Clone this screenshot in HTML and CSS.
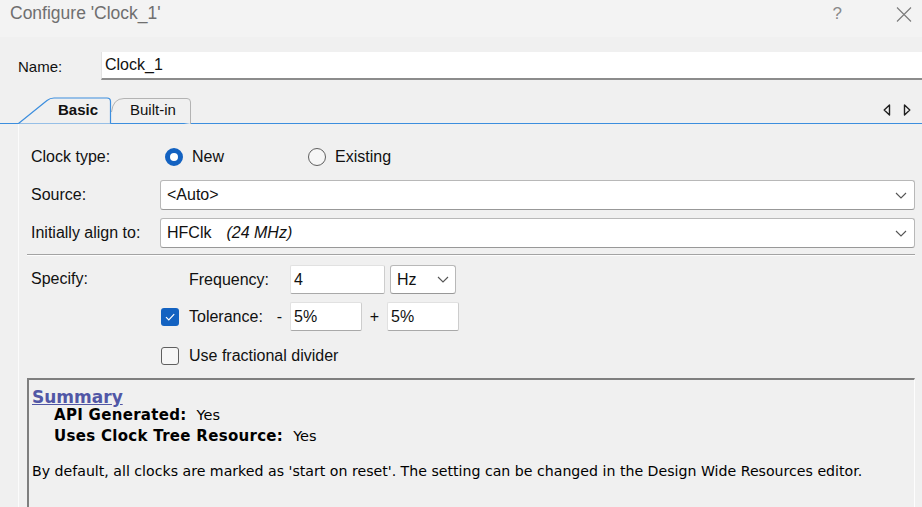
FILE: index.html
```html
<!DOCTYPE html>
<html>
<head>
<meta charset="utf-8">
<link rel="stylesheet" href="styles.css">
</head>
<body>
<div class="window">
  <header class="titlebar">
    <span class="title">Configure 'Clock_1'</span>
    <span class="help">?</span>
    <span class="close"><svg width="16" height="15" viewBox="0 0 16 15"><path d="M1 0.5 L15 14.5 M15 0.5 L1 14.5" stroke="#7a7a7a" stroke-width="1.1" fill="none"/></svg></span>
  </header>

  <div class="name-row">
    <span class="name-label">Name:</span>
    <div class="name-input">Clock_1</div>
  </div>

  <div class="tabstrip">
    <div class="tab tab-basic">
      <svg class="tab-shape" width="94" height="27" viewBox="0 0 94 27"><path d="M0.5 26.5 L29 3.5 Q32 1 36 1 L89 1 Q92.5 1 92.5 4.5 L92.5 26.5" fill="#f0f0f0" stroke="#3c8ede" stroke-width="1.2"/></svg>
      <span class="tab-text bold">Basic</span>
    </div>
    <div class="tab tab-builtin">
      <svg class="tab-shape" width="80" height="26" viewBox="0 0 80 26"><path d="M0.5 14 Q2 0.5 13 0.5 L76 0.5 Q79.5 0.5 79.5 4 L79.5 26" fill="#f0f0f0" stroke="#b3b3b3" stroke-width="1"/></svg>
      <span class="tab-text">Built-in</span>
    </div>
    <div class="tab-arrows">
      <svg width="8" height="12" viewBox="0 0 8 12"><path d="M6.5 1 L1.2 6 L6.5 11 Z" fill="none" stroke="#202020" stroke-width="1.4" stroke-linejoin="round"/></svg>
      <svg width="8" height="12" viewBox="0 0 8 12"><path d="M1.5 1 L6.8 6 L1.5 11 Z" fill="none" stroke="#202020" stroke-width="1.4" stroke-linejoin="round"/></svg>
    </div>
  </div>

  <section class="panel">
    <div class="row">
      <span class="label">Clock type:</span>
      <div class="radio-group">
        <span class="radio-item"><span class="radio checked"></span>New</span>
        <span class="radio-item"><span class="radio"></span>Existing</span>
      </div>
    </div>
    <div class="row">
      <span class="label">Source:</span>
      <div class="combo"><span class="combo-text">&lt;Auto&gt;</span><svg class="chev" width="12" height="7" viewBox="0 0 12 7"><path d="M1 1 L6 6 L11 1" fill="none" stroke="#555" stroke-width="1.1"/></svg></div>
    </div>
    <div class="row">
      <span class="label">Initially align to:</span>
      <div class="combo"><span class="combo-text">HFClk<i class="freq-note">(24 MHz)</i></span><svg class="chev" width="12" height="7" viewBox="0 0 12 7"><path d="M1 1 L6 6 L11 1" fill="none" stroke="#555" stroke-width="1.1"/></svg></div>
    </div>

    <div class="separator"></div>

    <div class="spec">
      <span class="spec-label">Specify:</span>
      <span class="cell-label c3 r1">Frequency:</span>
      <div class="cell-inputs c4 r1">
        <div class="textbox w95">4</div>
        <div class="combo small"><span class="combo-text">Hz</span><svg class="chev" width="12" height="7" viewBox="0 0 12 7"><path d="M1 1 L6 6 L11 1" fill="none" stroke="#555" stroke-width="1.1"/></svg></div>
      </div>

      <span class="check checked c2 r2"><svg width="12" height="10" viewBox="0 0 12 10"><path d="M2 5.2 L4.8 8 L10.2 2.2" fill="none" stroke="#fff" stroke-width="1.2"/></svg></span>
      <span class="cell-label c3 r2 split"><span>Tolerance:</span><span class="minus">-</span></span>
      <div class="cell-inputs c4 r2">
        <div class="textbox w72">5%</div>
        <span class="plus">+</span>
        <div class="textbox w72">5%</div>
      </div>

      <span class="check c2 r3"></span>
      <span class="cell-label c34 r3">Use fractional divider</span>
    </div>

    <div class="summary">
      <div class="sum-title">Summary</div>
      <div class="sum-line first"><b>API Generated:</b><span class="val">Yes</span></div>
      <div class="sum-line"><b>Uses Clock Tree Resource:</b><span class="val">Yes</span></div>
      <div class="sum-note">By default, all clocks are marked as 'start on reset'. The setting can be changed in the Design Wide Resources editor.</div>
    </div>
  </section>
</div>
</body>
</html>
```
FILE: styles.css
```css
html, body {
  margin: 0;
  padding: 0;
}
body {
  width: 922px;
  height: 507px;
  overflow: hidden;
  background: #f0f0f0;
  font-family: "Liberation Sans", Arial, sans-serif;
  font-size: 15px;
  color: #111;
}
.window {
  display: flex;
  flex-direction: column;
  width: 922px;
  height: 507px;
  overflow: hidden;
}

/* title bar */
.titlebar {
  height: 37px;
  box-sizing: border-box;
  background: #f3f3f3;
  display: flex;
  align-items: flex-start;
  padding: 3px 10px 0 10px;
  flex-shrink: 0;
}
.title {
  font-size: 17.5px;
  line-height: 21px;
  color: #6f6f6f;
}
.help {
  margin-left: auto;
  font-size: 17px;
  line-height: 21px;
  color: #8a8a8a;
  margin-right: 54px;
}
.close {
  display: flex;
  margin-top: 4px;
}

/* name */
.name-row {
  display: flex;
  align-items: center;
  margin-top: 15px;
  padding-left: 18px;
  height: 28px;
  flex-shrink: 0;
}
.name-label {
  width: 83px;
}
.name-input {
  flex: 1;
  height: 28px;
  box-sizing: border-box;
  background: #fff;
  border-left: 1px solid #e2e2e2;
  border-bottom: 2px solid #8c8c8c;
  padding-left: 3px;
  line-height: 26px;
  font-size: 16px;
}

/* tabs */
.tabstrip {
  display: flex;
  align-items: flex-end;
  margin-top: 16px;
  height: 27px;
  padding-left: 18px;
  border-bottom: 1px solid #3c8ede;
  flex-shrink: 0;
}
.tab {
  position: relative;
  display: flex;
  align-items: center;
}
.tab-shape {
  position: absolute;
  left: 0;
  bottom: -1px;
}
.tab-basic {
  width: 93px;
  height: 27px;
  z-index: 2;
}
.tab-basic .tab-text {
  margin-left: 40px;
}
.tab-builtin {
  width: 80px;
  height: 26px;
  z-index: 1;
}
.tab-builtin .tab-text {
  margin-left: 19px;
}
.tab-text {
  position: relative;
  line-height: 26px;
  font-size: 15px;
}
.bold {
  font-weight: bold;
}
.tab-arrows {
  margin-left: auto;
  display: flex;
  gap: 12px;
  align-self: center;
  padding-right: 11px;
}

/* panel */
.panel {
  margin-left: 18px;
  border-left: 1px solid #fbfbfb;
  padding: 18px 7px 0 12px;
  flex: 1;
  min-height: 0;
  display: flex;
  flex-direction: column;
  font-size: 16px;
}
.row {
  display: flex;
  align-items: center;
  height: 30px;
  flex-shrink: 0;
}
.row + .row {
  margin-top: 8px;
}
.label {
  width: 129px;
  flex-shrink: 0;
}
.radio-group {
  display: flex;
  padding-left: 5px;
}
.radio-item {
  display: flex;
  align-items: center;
  width: 143px;
}
.radio {
  width: 18px;
  height: 18px;
  box-sizing: border-box;
  border-radius: 50%;
  border: 1px solid #5f5f5f;
  background: #f6f6f6;
  margin-right: 9px;
  flex-shrink: 0;
}
.radio.checked {
  border: 5px solid #1362c1;
  background: #fff;
}
.combo {
  flex: 1;
  height: 30px;
  box-sizing: border-box;
  background: #fff;
  border: 1px solid #b8b8b8;
  border-bottom-color: #989898;
  border-radius: 3px;
  display: flex;
  align-items: center;
  padding: 0 7px 0 6px;
}
.combo-text {
  flex: 1;
}
.freq-note {
  margin-left: 15px;
}
.chev {
  flex-shrink: 0;
}

.separator {
  margin: 6px 0 0 -4px;
  border-top: 1px solid #a3a3a3;
  border-bottom: 1px solid #fdfdfd;
  flex-shrink: 0;
}

/* specify grid */
.spec {
  margin-top: 9px;
  display: grid;
  grid-template-columns: 129px 29px 101px 1fr;
  grid-template-rows: 29px 29px 34px;
  row-gap: 8px;
  align-items: center;
  flex-shrink: 0;
}
.spec-label {
  grid-column: 1;
  grid-row: 1;
  align-self: start;
  padding-top: 5px;
}
.c2 { grid-column: 2; }
.c3 { grid-column: 3; }
.c4 { grid-column: 4; }
.c34 { grid-column: 3 / 5; }
.r1 { grid-row: 1; }
.r2 { grid-row: 2; }
.r3 { grid-row: 3; }
.cell-inputs {
  display: flex;
  align-items: center;
  height: 29px;
}
.split {
  display: flex;
  justify-content: space-between;
}
.minus {
  margin-right: 8px;
}
.textbox {
  height: 29px;
  box-sizing: border-box;
  background: #fff;
  border: 1px solid #e1e1e1;
  border-right-color: #cdcdcd;
  border-bottom: 1px solid #a9a9a9;
  border-radius: 2px;
  padding-left: 3px;
  line-height: 27px;
}
.w95 { width: 95px; }
.w72 { width: 72px; }
.combo.small {
  flex: none;
  width: 66px;
  height: 29px;
  margin-left: 5px;
  padding: 0 6px 0 6px;
}
.plus {
  width: 25px;
  text-align: center;
}
.check {
  width: 18px;
  height: 18px;
  box-sizing: border-box;
  margin-left: 1px;
  border-radius: 3px;
  border: 1px solid #5f5f5f;
  background: #f6f6f6;
  display: flex;
  align-items: center;
  justify-content: center;
}
.check.checked {
  border: none;
  background: #1362c1;
}

/* summary */
.summary {
  margin: 5px 0 0 -4px;
  flex: 1;
  min-height: 0;
  overflow: hidden;
  box-sizing: border-box;
  border-top: 2px solid #7f7f7f;
  border-left: 2px solid #7f7f7f;
  border-right: 1px solid #fdfdfd;
  padding: 7px 0 0 3px;
  font-family: "DejaVu Sans", Verdana, sans-serif;
  font-size: 14px;
  color: #000;
}
.sum-title {
  font-size: 17px;
  font-weight: bold;
  line-height: 20px;
  color: #5157a6;
  text-decoration: underline;
  display: inline-block;
}
.sum-line {
  padding-left: 22px;
  line-height: 20px;
  font-size: 15px;
}
.sum-line b {
  letter-spacing: 0.3px;
}
.sum-line.first {
  margin-top: -2px;
}
.sum-line + .sum-line {
  margin-top: 1px;
}
.val {
  margin-left: 10px;
  font-size: 14.5px;
}
.sum-note {
  margin-top: 15px;
  line-height: 20px;
  font-size: 14.15px;
}
```
